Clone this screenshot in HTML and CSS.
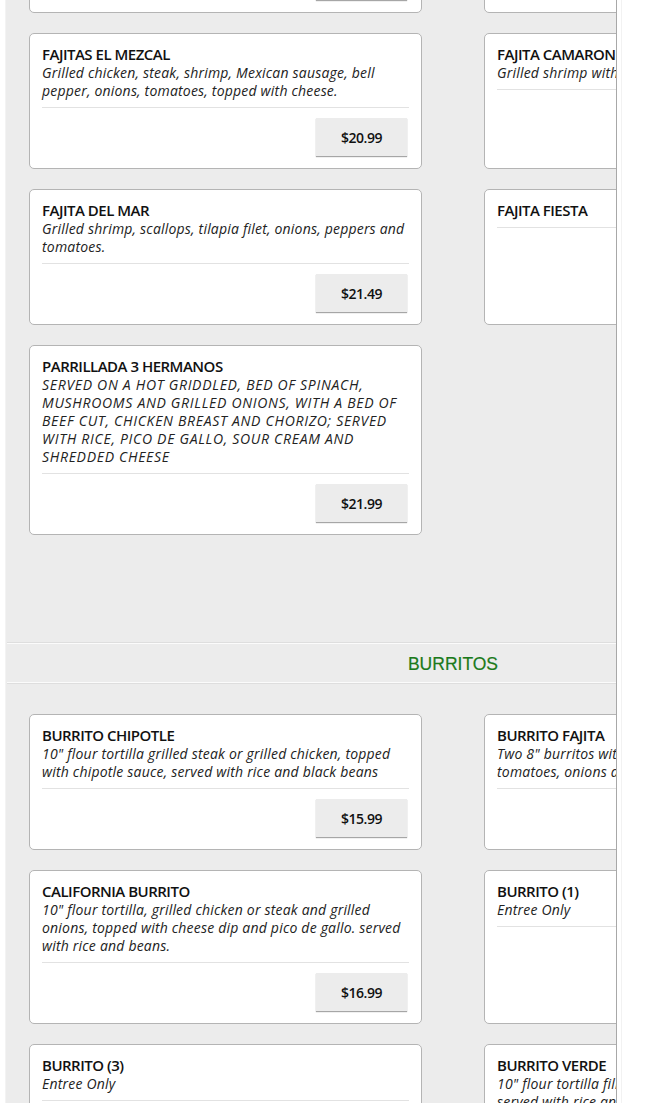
FILE: index.html
```html
<!DOCTYPE html>
<html>
<head>
<meta charset="utf-8">
<link rel="stylesheet" href="styles.css">
</head>
<body>
<div class="viewport">
  <div class="board">
    <section class="section section-first">
      <div class="grid">
        <div class="card">
          <div class="title">FAJITA TEXANA</div>
          <div class="desc">Grilled steak, chicken and shrimp.</div>
          <div class="sep"></div>
          <div class="foot"><span class="price">$19.99</span></div>
        </div>
        <div class="card">
          <div class="title">FAJITA MIXTA</div>
          <div class="desc">Grilled steak and chicken.</div>
          <div class="sep"></div>
          <div class="foot"><span class="price">$18.99</span></div>
        </div>

        <div class="card">
          <div class="title">FAJITAS EL MEZCAL</div>
          <div class="desc">Grilled chicken, steak, shrimp, Mexican sausage, bell pepper, onions, tomatoes, topped with cheese.</div>
          <div class="sep"></div>
          <div class="foot"><span class="price">$20.99</span></div>
        </div>
        <div class="card">
          <div class="title">FAJITA CAMARON</div>
          <div class="desc">Grilled shrimp with onions and peppers.</div>
          <div class="sep"></div>
          <div class="foot"><span class="price">$18.99</span></div>
        </div>

        <div class="card">
          <div class="title">FAJITA DEL MAR</div>
          <div class="desc">Grilled shrimp, scallops, tilapia filet, onions, peppers and tomatoes.</div>
          <div class="sep"></div>
          <div class="foot"><span class="price">$21.49</span></div>
        </div>
        <div class="card">
          <div class="title">FAJITA FIESTA</div>
          <div class="sep"></div>
          <div class="foot"><span class="price">$19.49</span></div>
        </div>

        <div class="card">
          <div class="title">PARRILLADA 3 HERMANOS</div>
          <div class="desc desc-caps">SERVED ON A HOT GRIDDLED, BED OF SPINACH, MUSHROOMS AND GRILLED ONIONS, WITH A BED OF BEEF CUT, CHICKEN BREAST AND CHORIZO; SERVED WITH RICE, PICO DE GALLO, SOUR CREAM AND SHREDDED CHEESE</div>
          <div class="sep"></div>
          <div class="foot"><span class="price">$21.99</span></div>
        </div>
      </div>
    </section>

    <h2 class="section-head">BURRITOS</h2>

    <section class="section">
      <div class="grid">
        <div class="card">
          <div class="title">BURRITO CHIPOTLE</div>
          <div class="desc">10" flour tortilla grilled steak or grilled chicken, topped with chipotle sauce, served with rice and black beans</div>
          <div class="sep"></div>
          <div class="foot"><span class="price">$15.99</span></div>
        </div>
        <div class="card">
          <div class="title">BURRITO FAJITA</div>
          <div class="desc">Two 8" burritos with grilled chicken or steak, peppers, tomatoes, onions and cheese.</div>
          <div class="sep"></div>
          <div class="foot"><span class="price">$15.99</span></div>
        </div>

        <div class="card">
          <div class="title">CALIFORNIA BURRITO</div>
          <div class="desc">10" flour tortilla, grilled chicken or steak and grilled onions, topped with cheese dip and pico de gallo. served with rice and beans.</div>
          <div class="sep"></div>
          <div class="foot"><span class="price">$16.99</span></div>
        </div>
        <div class="card">
          <div class="title">BURRITO (1)</div>
          <div class="desc">Entree Only</div>
          <div class="sep"></div>
          <div class="foot"><span class="price">$5.99</span></div>
        </div>

        <div class="card">
          <div class="title">BURRITO (3)</div>
          <div class="desc">Entree Only</div>
          <div class="sep"></div>
          <div class="foot"><span class="price">$13.99</span></div>
        </div>
        <div class="card">
          <div class="title">BURRITO VERDE</div>
          <div class="desc">10" flour tortilla filled with chicken and green sauce, served with rice and beans.</div>
          <div class="sep"></div>
          <div class="foot"><span class="price">$15.99</span></div>
        </div>
      </div>
    </section>
  </div>
</div>
</body>
</html>
```
FILE: styles.css
```css
html, body {
  margin: 0;
  padding: 0;
  background: #ffffff;
  height: 100%;
  overflow: hidden;
}

.viewport {
  margin-left: 5px;
  width: 610px;
  height: 1103px;
  overflow: hidden;
  border-left: 1px solid #f3f3f3;
  border-right: 1px solid #a8a8a8;
  box-shadow: 4px 0 0 #ffffff, 5px 0 0 #f2f2f2;
  background: #ececec;
}

.board {
  width: 892px;
  margin-left: 1px;
  background: #ececec;
  font-family: "Open Sans", "Lato", sans-serif;
  color: #1a1a1a;
}

.section {
  padding: 31px 22px 108px 22px;
}

.section-first {
  margin-top: -105px;
  padding-top: 0;
}

.grid {
  display: grid;
  grid-template-columns: 393px 393px;
  column-gap: 62px;
  row-gap: 20px;
  align-items: stretch;
}

.card {
  background: #ffffff;
  border: 1px solid #b4b4b4;
  border-radius: 5px;
  padding: 11px 12px 12px 12px;
  display: flex;
  flex-direction: column;
}

.title {
  font-size: 15px;
  line-height: 19px;
  font-weight: 600;
  letter-spacing: -0.5px;
  color: #111;
}

.desc {
  font-size: 14px;
  line-height: 18px;
  font-style: italic;
  letter-spacing: 0.2px;
  color: #222;
}

.desc-caps {
  letter-spacing: 0.7px;
}

.sep {
  height: 1px;
  background: #e2e2e2;
  margin-top: 7px;
}

.foot {
  display: flex;
  justify-content: flex-end;
  padding: 10px 2px 0 0;
}

.price {
  display: flex;
  align-items: center;
  justify-content: center;
  width: 91px;
  height: 38px;
  background: #ececec;
  box-shadow: 0 1px 1px rgba(0, 0, 0, 0.35);
  font-size: 14px;
  font-weight: 600;
  color: #111;
  letter-spacing: -0.5px;
}

.section-head {
  margin: 0;
  height: 38px;
  line-height: 40px;
  text-align: center;
  font-family: "Liberation Sans", Arial, sans-serif;
  font-size: 17.5px;
  font-weight: 400;
  color: #1b7a1b;
  -webkit-text-stroke: 0.2px #1b7a1b;
  border-top: 1px solid #fbfbfb;
  border-bottom: 1px solid #fbfbfb;
  box-shadow: 0 -1px 0 #dedede, 0 1px 0 #dedede;
}
```
